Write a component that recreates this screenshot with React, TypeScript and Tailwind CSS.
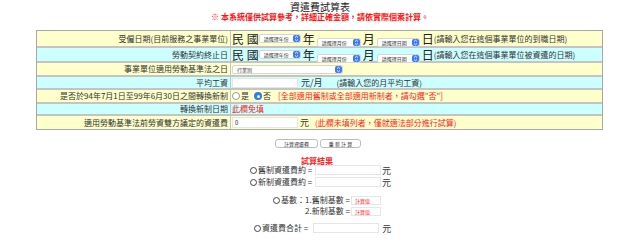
import React from 'react';

const Arrow: React.FC = () => (
  <span className="flex h-full w-[7px] items-center justify-center rounded-[2px] bg-[#3a7bf0]">
    <svg width="5" height="7" viewBox="0 0 5 7" fill="none">
      <path d="M1 2.6 L2.5 1.2 L4 2.6" stroke="#fff" strokeWidth="0.9" />
      <path d="M1 4.4 L2.5 5.8 L4 4.4" stroke="#fff" strokeWidth="0.9" />
    </svg>
  </span>
);

const Select: React.FC<{ label: string; w: string }> = ({ label, w }) => (
  <span className={`inline-flex h-[9px] items-center rounded-[2px] border border-[#d6d6d6] bg-white ${w}`}>
    <span className="flex-1 pl-[4px] text-[5px] leading-none text-[#333]">{label}</span>
    <Arrow />
  </span>
);

const Radio: React.FC<{ checked?: boolean }> = ({ checked }) =>
  checked ? (
    <span className="flex h-[8px] w-[8px] items-center justify-center rounded-full bg-[#2f7bf5]">
      <span className="h-[3px] w-[3px] rounded-full bg-white" />
    </span>
  ) : (
    <span className="h-[8px] w-[8px] rounded-full border border-[#9a9a9a] bg-white" />
  );

const Ring: React.FC = () => (
  <span className="mr-[1px] h-[7px] w-[7px] rounded-full border-[1.5px] border-[#444]" />
);

const Box: React.FC<{ w: string }> = ({ w }) => (
  <span className={`h-[10px] border border-[#e6e6e6] bg-white ${w}`} />
);

const Calc: React.FC = () => (
  <span className="ml-[1px] flex h-[9px] w-[30px] items-center border border-[#e6e6e6] bg-white pl-[3px] text-[5px] leading-none text-[#f22]">
    計算值
  </span>
);

const rows: { label: string; bg: string; h: string; body: React.ReactNode }[] = [
  {
    label: '受僱日期(目前服務之事業單位)',
    bg: 'bg-[#ffffcc]',
    h: 'h-[15px]',
    body: 'date1',
  },
  { label: '勞動契約終止日', bg: 'bg-[#ccffff]', h: 'h-[13px]', body: 'date2' },
  {
    label: '事業單位適用勞動基準法之日',
    bg: 'bg-[#ffffcc]',
    h: 'h-[12px]',
    body: <Select label="行業別" w="w-[111px]" />,
  },
  {
    label: '平均工資',
    bg: 'bg-[#ccffff]',
    h: 'h-[11px]',
    body: (
      <>
        <Box w="w-[66px]" />
        <span className="ml-[3px] text-[9px] text-[#333]">元/月</span>
        <span className="ml-[14px] text-[8px] text-[#333]">(請輸入您的月平均工資)</span>
      </>
    ),
  },
  {
    label: '是否於94年7月1日至99年6月30日之間轉換新制',
    bg: 'bg-[#ffffcc]',
    h: 'h-[12px]',
    body: (
      <>
        <Radio />
        <span className="ml-[1px] text-[8px] text-[#333]">是</span>
        <span className="ml-[5px]"><Radio checked /></span>
        <span className="ml-[1px] text-[8px] text-[#333]">否</span>
        <span className="ml-[7px] text-[8px] text-[#f22]">[全部適用舊制或全部適用新制者，請勾選"否"]</span>
      </>
    ),
  },
  {
    label: '轉換新制日期',
    bg: 'bg-[#ccffff]',
    h: 'h-[10px]',
    body: <span className="text-[8px] text-[#e22]">此欄免填</span>,
  },
  {
    label: '適用勞動基準法前勞資雙方議定的資遣費',
    bg: 'bg-[#ffffcc]',
    h: 'h-[13px]',
    body: (
      <>
        <span className="flex h-[11px] w-[66px] items-center border border-[#e6e6e6] bg-white pl-[2px] text-[6px] leading-none text-[#222]">0</span>
        <span className="ml-[2px] text-[9px] text-[#333]">元</span>
        <span className="ml-[6px] text-[8px] text-[#f22]">(此欄未填列者，僅就適法部分進行試算)</span>
      </>
    ),
  },
];

const DateRow: React.FC<{ hint: string }> = ({ hint }) => (
  <>
    <span className="text-[12px] text-[#222]">民 國</span>
    <Select label="請選擇年份" w="w-[42px]" />
    <span className="ml-[2px] text-[12px] text-[#222]">年</span>
    <span className="ml-[2px]"><Select label="請選擇月份" w="w-[44px]" /></span>
    <span className="ml-[2px] text-[12px] text-[#222]">月</span>
    <span className="ml-[2px]"><Select label="請選擇日期" w="w-[43px]" /></span>
    <span className="ml-[2px] text-[12px] text-[#222]">日</span>
    <span className="text-[8px] text-[#333]">{hint}</span>
  </>
);

export default function App() {
  return (
    <div className="h-[244px] w-[640px] overflow-hidden bg-white font-['Noto_Sans_CJK_TC',sans-serif] leading-none">
      <div className="pt-[2px] text-center font-['Liberation_Sans','Noto_Sans_CJK_TC',sans-serif] text-[10px] leading-[11px] text-[#222]">
        資遣費試算表
      </div>
      <div className="mt-[1px] text-center font-['Liberation_Sans','Noto_Sans_CJK_TC',sans-serif] text-[8px] font-bold leading-[8px] text-[#f11]">
        ※ 本系統僅供試算參考，詳細正確金額，請依實際個案計算。
      </div>

      <div className="ml-[36px] mt-[8px] grid w-[567px] grid-cols-[193px_1fr] gap-x-[1px] gap-y-[2px] border border-[#a8a8a8] bg-[#c4c4c4]">
        {rows.map((r) => (
          <React.Fragment key={r.label}>
            <div className={`flex items-center justify-end pr-[2px] text-[8px] text-[#333] ${r.bg} ${r.h}`}>{r.label}</div>
            <div className={`flex items-center whitespace-nowrap pl-[1px] ${r.bg} ${r.h}`}>
              {r.body === 'date1' ? (
                <DateRow hint="(請輸入您在這個事業單位的到職日期)" />
              ) : r.body === 'date2' ? (
                <DateRow hint="(請輸入您在這個事業單位被資遣的日期)" />
              ) : (
                r.body
              )}
            </div>
          </React.Fragment>
        ))}
      </div>

      <div className="mt-[9px] flex justify-center gap-[2px] pr-[4px]">
        <button className="flex h-[9px] w-[43px] items-center justify-center rounded-[3px] border border-[#bdbdbd] bg-white text-[5px] text-[#333]">計算資遣費</button>
        <button className="flex h-[9px] w-[41px] items-center justify-center rounded-[3px] border border-[#bdbdbd] bg-white text-[5px] text-[#333]">重 新 計 算</button>
      </div>

      <div className="mt-[9px] pr-[6px] text-center text-[8px] font-bold leading-[8px] text-[#f22]">試算結果</div>

      <div className="text-[8px] text-[#333]">
        <div className="flex items-center pl-[250px]">
          <Ring />
          <span className="w-[57px]">舊制資遣費約 =</span>
          <Box w="w-[66px]" />
          <span className="ml-[1px] text-[9px]">元</span>
        </div>
        <div className="mt-[2px] flex items-center pl-[250px]">
          <Ring />
          <span className="w-[57px]">新制資遣費約 =</span>
          <Box w="w-[66px]" />
          <span className="ml-[1px] text-[9px]">元</span>
        </div>

        <div className="mt-[8px] flex pl-[273px]">
          <div className="flex h-[10px] items-center">
            <Ring />
            <span>基數：</span>
          </div>
          <div className="flex flex-col items-end gap-[1px]">
            <div className="flex h-[10px] items-center">
              <span>1.舊制基數 =</span>
              <Calc />
            </div>
            <div className="flex h-[10px] items-center">
              <span>2.新制基數 =</span>
              <Calc />
            </div>
          </div>
        </div>

        <div className="mt-[7px] flex items-center pl-[254px]">
          <Ring />
          <span className="mr-[5px]">資遣費合計 =</span>
          <Box w="w-[66px]" />
          <span className="ml-[3px] text-[9px]">元</span>
        </div>
      </div>
    </div>
  );
}
